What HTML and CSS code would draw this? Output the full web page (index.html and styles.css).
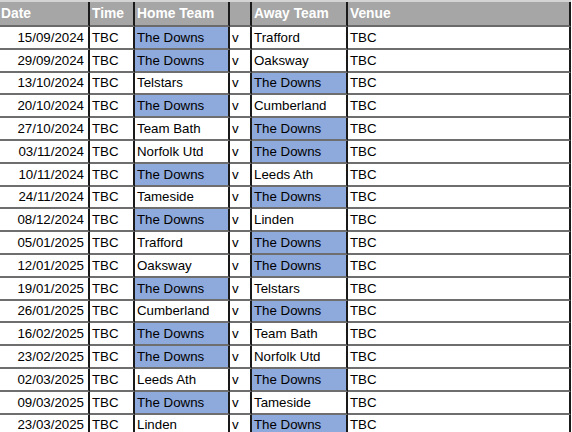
FILE: index.html
```html
<!DOCTYPE html>
<html>
<head>
<meta charset="utf-8">
<link rel="stylesheet" href="styles.css">
</head>
<body>
<div class="sheet">
  <div class="hd">Date</div><div class="hd">Time</div><div class="hd">Home Team</div><div class="hd"></div><div class="hd">Away Team</div><div class="hd">Venue</div>

  <div class="c date">15/09/2024</div><div class="c">TBC</div><div class="c blue">The Downs</div><div class="c">v</div><div class="c">Trafford</div><div class="c">TBC</div>
  <div class="c date">29/09/2024</div><div class="c">TBC</div><div class="c blue">The Downs</div><div class="c">v</div><div class="c">Oaksway</div><div class="c">TBC</div>
  <div class="c date">13/10/2024</div><div class="c">TBC</div><div class="c">Telstars</div><div class="c">v</div><div class="c blue">The Downs</div><div class="c">TBC</div>
  <div class="c date">20/10/2024</div><div class="c">TBC</div><div class="c blue">The Downs</div><div class="c">v</div><div class="c">Cumberland</div><div class="c">TBC</div>
  <div class="c date">27/10/2024</div><div class="c">TBC</div><div class="c">Team Bath</div><div class="c">v</div><div class="c blue">The Downs</div><div class="c">TBC</div>
  <div class="c date">03/11/2024</div><div class="c">TBC</div><div class="c">Norfolk Utd</div><div class="c">v</div><div class="c blue">The Downs</div><div class="c">TBC</div>
  <div class="c date">10/11/2024</div><div class="c">TBC</div><div class="c blue">The Downs</div><div class="c">v</div><div class="c">Leeds Ath</div><div class="c">TBC</div>
  <div class="c date">24/11/2024</div><div class="c">TBC</div><div class="c">Tameside</div><div class="c">v</div><div class="c blue">The Downs</div><div class="c">TBC</div>
  <div class="c date">08/12/2024</div><div class="c">TBC</div><div class="c blue">The Downs</div><div class="c">v</div><div class="c">Linden</div><div class="c">TBC</div>
  <div class="c date">05/01/2025</div><div class="c">TBC</div><div class="c">Trafford</div><div class="c">v</div><div class="c blue">The Downs</div><div class="c">TBC</div>
  <div class="c date">12/01/2025</div><div class="c">TBC</div><div class="c">Oaksway</div><div class="c">v</div><div class="c blue">The Downs</div><div class="c">TBC</div>
  <div class="c date">19/01/2025</div><div class="c">TBC</div><div class="c blue">The Downs</div><div class="c">v</div><div class="c">Telstars</div><div class="c">TBC</div>
  <div class="c date">26/01/2025</div><div class="c">TBC</div><div class="c">Cumberland</div><div class="c">v</div><div class="c blue">The Downs</div><div class="c">TBC</div>
  <div class="c date">16/02/2025</div><div class="c">TBC</div><div class="c blue">The Downs</div><div class="c">v</div><div class="c">Team Bath</div><div class="c">TBC</div>
  <div class="c date">23/02/2025</div><div class="c">TBC</div><div class="c blue">The Downs</div><div class="c">v</div><div class="c">Norfolk Utd</div><div class="c">TBC</div>
  <div class="c date">02/03/2025</div><div class="c">TBC</div><div class="c">Leeds Ath</div><div class="c">v</div><div class="c blue">The Downs</div><div class="c">TBC</div>
  <div class="c date">09/03/2025</div><div class="c">TBC</div><div class="c blue">The Downs</div><div class="c">v</div><div class="c">Tameside</div><div class="c">TBC</div>
  <div class="c date">23/03/2025</div><div class="c">TBC</div><div class="c">Linden</div><div class="c">v</div><div class="c blue">The Downs</div><div class="c">TBC</div>
</div>
</body>
</html>
```

FILE: styles.css
```css
html, body {
  margin: 0;
  padding: 0;
  background: #ffffff;
}

.sheet {
  display: grid;
  grid-template-columns: 90px 45px 95px 22px 96px 223px;
  grid-template-rows: 25px;
  grid-auto-rows: 22.8px;
  width: 571px;
  border-top: 2px solid #d4d4d4;
  font-family: "Liberation Sans", Arial, sans-serif;
  font-size: 13px;
  color: #000;
}

.hd {
  background: #a6a6a6;
  color: #ffffff;
  font-weight: bold;
  font-size: 13.8px;
  box-sizing: border-box;
  border-right: 2px solid #1a1a1a;
  border-bottom: 2px solid #6a6a6a;
  padding-left: 2px;
  display: flex;
  align-items: center;
  white-space: nowrap;
  overflow: hidden;
}

.hd:first-child {
  padding-left: 1px;
}

.c {
  box-sizing: border-box;
  border-right: 2px solid #1a1a1a;
  border-bottom: 2px solid #6e6e6e;
  padding-left: 2px;
  display: flex;
  align-items: center;
  white-space: nowrap;
  overflow: hidden;
  background: #ffffff;
  font-size: 13.3px;
}

.c.date {
  justify-content: flex-end;
  padding-right: 4px;
}

.c.blue {
  background: #8ea9db;
}
```
